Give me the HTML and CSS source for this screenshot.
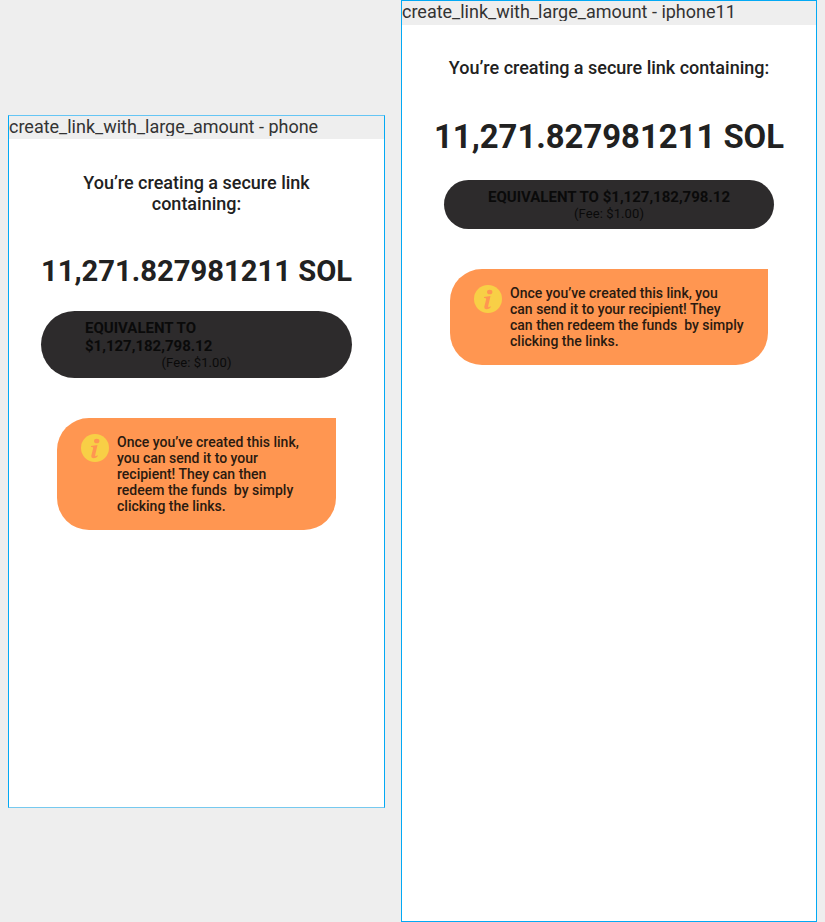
FILE: index.html
```html
<!DOCTYPE html>
<html lang="en">
<head>
<meta charset="utf-8">
<title>create_link_with_large_amount</title>
<link rel="stylesheet" href="styles.css">
</head>
<body>
<main class="board">
  <section class="device phone">
    <header class="label"><div class="name">create_link_with_large_amount - phone</div></header>
    <div class="screen">
      <h1 class="title">You’re creating a secure link containing:</h1>
      <p class="amount">11,271.827981211 SOL</p>
      <div class="pill"><p class="equiv">EQUIVALENT TO $1,127,182,798.12</p><p class="fee">(Fee: $1.00)</p></div>
      <div class="notice">
        <svg class="info" viewBox="0 0 28 28"><circle cx="14" cy="14" r="14" fill="#f8cf46"/><ellipse cx="15.700" cy="7" rx="2.700" ry="2.300" fill="#ff9651"/><path d="M10 12.100l6.500-1-2.300 10c-.3 1.400.5 1.500 2.100.2l.6.7c-1.300 1.500-2.700 2.200-4.200 2.200-2 0-2.700-1.200-2.300-3l1.700-6.700c.2-1-.4-1.400-2.100-1.400z" fill="#ff9651"/></svg>
        <p class="message">Once you’ve created this link,<br>you can send it to your<br>recipient! They can then<br>redeem the funds&nbsp; by simply<br>clicking the links.</p>
      </div>
    </div>
  </section>
  <section class="device iphone">
    <header class="label"><div class="name">create_link_with_large_amount - iphone11</div></header>
    <div class="screen">
      <h1 class="title">You’re creating a secure link containing:</h1>
      <p class="amount">11,271.827981211 SOL</p>
      <div class="pill"><p class="equiv">EQUIVALENT TO $1,127,182,798.12</p><p class="fee">(Fee: $1.00)</p></div>
      <div class="notice">
        <svg class="info" viewBox="0 0 28 28"><circle cx="14" cy="14" r="14" fill="#f8cf46"/><ellipse cx="15.700" cy="7" rx="2.700" ry="2.300" fill="#ff9651"/><path d="M10 12.100l6.500-1-2.300 10c-.3 1.400.5 1.500 2.100.2l.6.7c-1.300 1.500-2.700 2.200-4.200 2.200-2 0-2.700-1.200-2.300-3l1.700-6.700c.2-1-.4-1.400-2.100-1.400z" fill="#ff9651"/></svg>
        <p class="message">Once you’ve created this link, you<br>can send it to your recipient! They<br>can then redeem the funds&nbsp; by simply<br>clicking the links.</p>
      </div>
    </div>
  </section>
</main>
</body>
</html>
```
FILE: styles.css
```css
* { box-sizing: border-box; margin: 0; }
body { background: #eee; font-family: Roboto, sans-serif; color: #212121; }
.board { display: flex; align-items: center; gap: 16px; padding-left: 8px; height: 922px; overflow: hidden; }
.device { border: 1px solid #03a9f4; display: flex; flex-direction: column; flex: none; }
.phone { width: 377px; height: 693px; border-top-color: #65c5f4; border-bottom-color: #76c9ef; }
.iphone { width: 416px; height: 922px; }
.label { height: 24px; background: #eee; }
.name { height: 20px; overflow: hidden; color: #333; font-size: 18px; font-weight: 400; line-height: 22px; white-space: nowrap; }
.screen { flex: 1; background: #fff; display: flex; flex-direction: column; align-items: center; padding: 32px 32px 0; }
.title { font-size: 18px; font-weight: 500; line-height: 21px; text-align: center; }
.amount { font-weight: 700; white-space: nowrap; }
.pill { background: #2d2b2c; color: #0a0a0a; width: 100%; display: flex; flex-direction: column; align-items: center; justify-content: center; }
.equiv { font-size: 15px; font-weight: 700; line-height: 18px; }
.fee { font-size: 13px; line-height: 15px; letter-spacing: .1px; }
.notice { background: #ff9651; display: flex; gap: 8px; padding: 16px 24px; border-radius: 32px 0 32px 32px; }
.info { width: 28px; height: 28px; flex: none; }
.message { color: #2a1a10; font-size: 14px; font-weight: 500; line-height: 16px; white-space: nowrap; }
.phone .label { height: 23px; }
.phone .screen { padding-top: 33px; }
.phone .amount { font-size: 29.200px; line-height: 36px; margin-top: 39px; }
.phone .pill { width: 311px; height: 67px; border-radius: 34px; margin-top: 22px; padding: 0 44px; }
.phone .equiv { width: 223px; }
.phone .notice { width: 279px; height: 112px; margin-top: 40px; }
.iphone .amount { font-size: 32.850px; line-height: 40px; margin-top: 39px; }
.iphone .pill { width: 330px; height: 49px; border-radius: 25px; margin-top: 23px; }
.iphone .notice { width: 318px; height: 96px; margin-top: 40px; }
```
